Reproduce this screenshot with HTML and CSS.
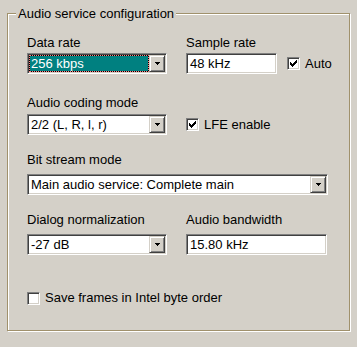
FILE: index.html
```html
<!DOCTYPE html>
<html>
<head>
<meta charset="utf-8">
<link rel="stylesheet" href="styles.css">
</head>
<body>
<fieldset class="group">
  <legend class="group-title">Audio service configuration</legend>
  <div class="content">
    <div class="row row-1">
      <div class="field col1">
        <div class="label">Data rate</div>
        <div class="combo">
          <div class="combo-value selected"><span class="focus">256 kbps</span></div>
          <div class="combo-button"><svg width="5" height="3" viewBox="0 0 5 3" shape-rendering="crispEdges"><path d="M0 0h5v1H0z M1 1h3v1H1z M2 2h1v1H2z" fill="#000"/></svg></div>
        </div>
      </div>
      <div class="field">
        <div class="label">Sample rate</div>
        <div class="inline">
          <div class="textbox textbox-short">48 kHz</div>
          <div class="check check-auto">
            <span class="box"><svg width="7" height="7" viewBox="0 0 7 7" shape-rendering="crispEdges"><path d="M6 0h1v1H6z M5 1h2v1H5z M0 2h1v1H0z M4 2h3v1H4z M0 3h2v1H0z M3 3h3v1H3z M0 4h5v1H0z M1 5h3v1H1z M2 6h1v1H2z" fill="#000"/></svg></span>
            <span class="check-text">Auto</span>
          </div>
        </div>
      </div>
    </div>

    <div class="row row-2">
      <div class="field col1">
        <div class="label">Audio coding mode</div>
        <div class="combo">
          <div class="combo-value">2/2 (L, R, l, r)</div>
          <div class="combo-button"><svg width="5" height="3" viewBox="0 0 5 3" shape-rendering="crispEdges"><path d="M0 0h5v1H0z M1 1h3v1H1z M2 2h1v1H2z" fill="#000"/></svg></div>
        </div>
      </div>
      <div class="check check-lfe">
        <span class="box"><svg width="7" height="7" viewBox="0 0 7 7" shape-rendering="crispEdges"><path d="M6 0h1v1H6z M5 1h2v1H5z M0 2h1v1H0z M4 2h3v1H4z M0 3h2v1H0z M3 3h3v1H3z M0 4h5v1H0z M1 5h3v1H1z M2 6h1v1H2z" fill="#000"/></svg></span>
        <span class="check-text">LFE enable</span>
      </div>
    </div>

    <div class="row row-3">
      <div class="field col-wide">
        <div class="label">Bit stream mode</div>
        <div class="combo">
          <div class="combo-value">Main audio service: Complete main</div>
          <div class="combo-button"><svg width="5" height="3" viewBox="0 0 5 3" shape-rendering="crispEdges"><path d="M0 0h5v1H0z M1 1h3v1H1z M2 2h1v1H2z" fill="#000"/></svg></div>
        </div>
      </div>
    </div>

    <div class="row row-4">
      <div class="field col1">
        <div class="label">Dialog normalization</div>
        <div class="combo">
          <div class="combo-value">-27 dB</div>
          <div class="combo-button"><svg width="5" height="3" viewBox="0 0 5 3" shape-rendering="crispEdges"><path d="M0 0h5v1H0z M1 1h3v1H1z M2 2h1v1H2z" fill="#000"/></svg></div>
        </div>
      </div>
      <div class="field">
        <div class="label">Audio bandwidth</div>
        <div class="textbox textbox-long">15.80 kHz</div>
      </div>
    </div>

    <div class="row row-5">
      <div class="check">
        <span class="box"></span>
        <span class="check-text">Save frames in Intel byte order</span>
      </div>
    </div>
  </div>
</fieldset>
</body>
</html>
```

FILE: styles.css
```css
* {
  box-sizing: border-box;
}

html, body {
  margin: 0;
  padding: 0;
}

body {
  width: 357px;
  height: 347px;
  overflow: hidden;
  background: #d4d0c8;
  font-family: "Liberation Sans", Arial, sans-serif;
  font-size: 13px;
  line-height: 16px;
  color: #000;
}

.group {
  margin: 6px 0 0 7px;
  padding: 0;
  width: 343px;
  height: 325px;
  min-width: 0;
  border: 1px solid #a0916c;
  box-shadow: 1px 1px 0 #fff, inset 1px 1px 0 #fff;
}

.group-title {
  margin-left: 8px;
  padding: 0 2px;
  line-height: 15px;
  background: #d4d0c8;
}

.content {
  padding: 14px 0 0 19px;
}

.row {
  display: flex;
  align-items: flex-start;
}

.row-2 {
  margin-top: 21px;
  align-items: flex-end;
}

.row-3 {
  margin-top: 17px;
}

.row-4 {
  margin-top: 17px;
}

.row-5 {
  margin-top: 35px;
}

.field {
  display: flex;
  flex-direction: column;
  gap: 2px;
}

.row-2 .field {
  gap: 3px;
}

.row-3 .field,
.row-4 .field {
  gap: 6px;
}

.col1 {
  width: 140px;
  margin-right: 19px;
}

.col-wide {
  width: 301px;
}

.label {
  height: 16px;
  white-space: nowrap;
}

/* sunken 2px edge */
.combo,
.textbox,
.box {
  border: 1px solid;
  border-color: #808080 #ffffff #ffffff #808080;
  box-shadow: inset 1px 1px 0 #404040, inset -1px -1px 0 #d4d0c8;
  background: #fff;
}

.combo {
  display: flex;
  height: 21px;
  padding: 1px;
}

.combo-value {
  flex: 1;
  min-width: 0;
  padding-left: 2px;
  line-height: 17px;
  white-space: nowrap;
  overflow: hidden;
}

.combo-value.selected {
  padding: 0;
  background: #000;
}

.focus {
  display: block;
  height: 100%;
  padding-left: 1px;
  line-height: 15px;
  border: 1px dotted #ff8080;
  background: #008080;
  background-clip: padding-box;
  color: #fff;
}

.combo-button {
  width: 16px;
  height: 17px;
  flex: none;
  display: flex;
  align-items: center;
  justify-content: center;
  background: #d4d0c8;
  border: 1px solid;
  border-color: #d4d0c8 #404040 #404040 #d4d0c8;
  box-shadow: inset 1px 1px 0 #fff, inset -1px -1px 0 #808080;
}

.combo-button svg {
  display: block;
}

.inline {
  display: flex;
  align-items: center;
}

.textbox {
  height: 21px;
  padding: 1px 3px;
  line-height: 17px;
  white-space: nowrap;
}

.textbox-short {
  width: 91px;
}

.textbox-long {
  width: 141px;
}

.check {
  display: flex;
  align-items: center;
  gap: 5px;
}

.check-auto {
  margin-left: 10px;
}

.check-lfe {
  height: 21px;
}

.box {
  width: 13px;
  height: 13px;
  padding: 2px;
  flex: none;
  display: block;
}

.box svg {
  display: block;
}

.check-text {
  white-space: nowrap;
}
```
